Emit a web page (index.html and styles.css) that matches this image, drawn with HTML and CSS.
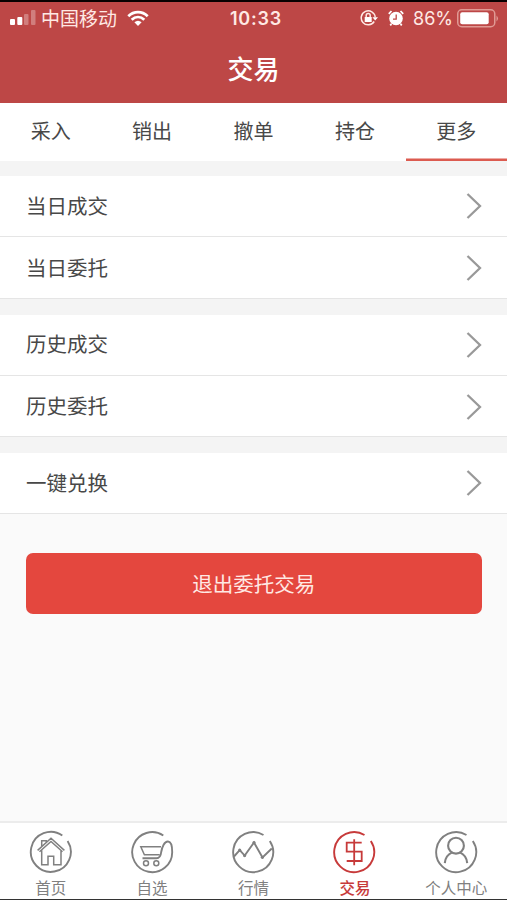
FILE: index.html
```html
<!DOCTYPE html>
<html lang="zh-CN">
<head>
<meta charset="utf-8">
<title>交易</title>
<link rel="stylesheet" href="styles.css">
</head>
<body>
<div class="app">
  <header class="header">
    <div class="status">
      <div class="status-left">
        <svg class="signal" width="26" height="16" viewBox="0 0 26 16"><rect x="0" y="9" width="5" height="6" rx="1"/><rect x="7.3" y="7" width="5" height="8" rx="1"/><rect class="dim" x="14" y="4" width="4.5" height="11" rx="1"/><rect class="dim" x="21" y="0" width="4.5" height="15" rx="1"/></svg>
        <span class="carrier">中国移动</span>
        <svg class="wifi" width="22" height="17" viewBox="0 0 22 17"><path d="M1.3 6.2C7 .8 15 .8 20.7 6.2M4.7 9.7c3.8-3.5 8.8-3.5 12.6 0"/><path class="solid" d="M7.4 12.3q3.6-3 7.2 0L11 16z"/></svg>
      </div>
      <time class="clock">10:33</time>
      <div class="status-right">
        <svg class="lock" width="18" height="16" viewBox="0 0 18 16"><path d="M14.2 11.5A7 7 0 1 1 15.2 7.2"/><path class="solid" d="M12.4 7.2H18L15.2 10.6zM4.7 7h7v5h-7z"/><path d="M6.2 7.2V5.6a2 2 0 0 1 4 0v1.6"/></svg>
        <svg class="alarm" width="16" height="16" viewBox="0 0 16 16"><circle class="solid" cx="8" cy="8.5" r="6.8"/><path d="M.8 3.8L3.5 1M15.2 3.8L12.5 1M3.5 14L2.2 15.3M12.5 14l1.3 1.3"/><path class="hands" d="M8.2 4.5v4.6H5"/></svg>
        <span class="percent">86%</span>
        <svg class="battery" width="42" height="19" viewBox="0 0 42 19"><rect class="case" x=".75" y=".75" width="37" height="17" rx="4"/><rect class="charge" x="3.2" y="3.2" width="28.5" height="12" rx="2"/><path class="tip" d="M39.5 6.5q3 3 0 6z"/></svg>
      </div>
    </div>
    <h1 class="title">交易</h1>
  </header>
  <nav class="tabs">
    <a class="tab">采入</a><a class="tab">销出</a><a class="tab">撤单</a><a class="tab">持仓</a><a class="tab tab-active">更多</a>
  </nav>
  <main class="content">
    <section class="group">
      <a class="row"><span>当日成交</span><svg class="arrow" viewBox="0 0 16 28"><path d="M1.5 2L14 14 1.5 26"/></svg></a>
      <a class="row"><span>当日委托</span><svg class="arrow" viewBox="0 0 16 28"><path d="M1.5 2L14 14 1.5 26"/></svg></a>
    </section>
    <section class="group">
      <a class="row"><span>历史成交</span><svg class="arrow" viewBox="0 0 16 28"><path d="M1.5 2L14 14 1.5 26"/></svg></a>
      <a class="row"><span>历史委托</span><svg class="arrow" viewBox="0 0 16 28"><path d="M1.5 2L14 14 1.5 26"/></svg></a>
    </section>
    <section class="group">
      <a class="row"><span>一键兑换</span><svg class="arrow" viewBox="0 0 16 28"><path d="M1.5 2L14 14 1.5 26"/></svg></a>
    </section>
    <button class="logout">退出委托交易</button>
  </main>
  <nav class="dock">
    <a class="dock-item">
      <svg class="dock-icon" viewBox="0 0 44 44"><path class="ring" d="M33.3 5.5A20 20 0 1 0 38.6 11"/><path d="M8.6 20.4L22 8.2l13.4 12.2M10.5 21.8L22 11.4l11.5 10.4M12.7 20v14.7H19v-8.4h5.7v8.4H32V20M12.7 16v-5.2h4.6v1.4"/></svg>
      <span>首页</span>
    </a>
    <a class="dock-item">
      <svg class="dock-icon" viewBox="0 0 44 44"><path class="ring" d="M33.3 5.5A20 20 0 1 0 42.2 22C42.2 16 41 11.8 38.2 11.5C34.5 11 32 17 31.2 22C30.8 26 29.5 28.3 26.5 28.3H12.5"/><path d="M31 16.7H10.8l3.6 8h15.3"/><circle cx="16" cy="33.2" r="2.5"/><circle cx="26.3" cy="33.2" r="2.5"/></svg>
      <span>自选</span>
    </a>
    <a class="dock-item">
      <svg class="dock-icon" viewBox="0 0 44 44"><path class="ring" d="M32.5 5A20 20 0 1 0 38.8 11"/><path class="ring" d="M3 26.5l5.7-6.3 5 5.4L23 12.5l8.5 15 9.3-9"/><g class="dots"><circle cx="8.7" cy="20.2" r="1.6"/><circle cx="13.6" cy="25.6" r="1.6"/><circle cx="23" cy="12.6" r="1.6"/><circle cx="31.4" cy="27.3" r="1.6"/></g></svg>
      <span>行情</span>
    </a>
    <a class="dock-item dock-active">
      <svg class="dock-icon" viewBox="0 0 44 44"><path class="ring" d="M32.5 5A20 20 0 1 0 38.8 11"/><path class="dollar" d="M29.7 12.7h-15v9h15V31h-15M22.2 9.2v26"/></svg>
      <span>交易</span>
    </a>
    <a class="dock-item">
      <svg class="dock-icon" viewBox="0 0 44 44"><path class="ring" d="M32.5 5A20 20 0 1 0 38.8 11"/><circle class="person" cx="22" cy="15.7" r="7.9"/><path class="person" d="M10.8 33.2c.4-5.3 3-8.9 7.4-10.8M33.2 33.2c-.4-5.3-3-8.9-7.4-10.8"/></svg>
      <span>个人中心</span>
    </a>
  </nav>
</div>
</body>
</html>
```
FILE: styles.css
```css
* { box-sizing: border-box; }

body {
  margin: 0;
  font-family: "Liberation Sans", "Noto Sans CJK SC", sans-serif;
  color: #484848;
}

.app {
  display: flex;
  flex-direction: column;
  height: 900px;
  overflow: hidden;
  background: #fafafa;
  border-top: 2px solid #090000;
  border-bottom: 1px solid #333;
}

.header {
  height: 101px;
  flex: none;
  background: #bd4746;
  color: #fff;
}

.status {
  display: grid;
  grid-template-columns: 1fr auto 1fr;
  align-items: center;
  height: 32px;
  padding: 0 8px 0 10px;
  color: #ffe9e4;
}

.status-left, .status-right { display: flex; align-items: center; }
.status-right { justify-content: flex-end; }
.status svg { flex: none; }

.signal { fill: #fff; }
.signal .dim { opacity: .3; }
.carrier { margin-left: 5px; padding-top: 3px; font-size: 19px; line-height: 29px; white-space: nowrap; }
.wifi { margin-left: 10px; fill: none; stroke: #fff; stroke-width: 2.8; }
.status .solid { fill: #fff; stroke: none; }

.clock {
  padding-left: 3px;
  font-family: Inter, "Liberation Sans", sans-serif;
  font-size: 18px;
  font-weight: 600;
  letter-spacing: .8px;
}

.lock { fill: none; stroke: #ffe9e4; stroke-width: 1.5; }
.alarm { margin-left: 10px; fill: none; stroke: #fff; stroke-width: 1.8; }
.alarm .hands { stroke: #bd4746; stroke-width: 1.3; }
.percent { margin: 0 4px 0 10px; font-family: Inter, sans-serif; font-size: 18px; }
.battery { fill: #fff; }
.lock, .alarm { transform: translateX(1px); }
.battery .case { fill: none; stroke: #e09a94; stroke-width: 1.5; }
.battery .tip { fill: #e09a94; }

.title {
  margin: 0;
  padding-top: 17px;
  font-size: 26px;
  font-weight: 500;
  line-height: 38px;
  text-align: center;
}

.tabs {
  display: grid;
  grid-template-columns: repeat(5, 1fr);
  flex: none;
  height: 58px;
  background: #fff;
}

.tab {
  padding-top: 2px;
  font-size: 20px;
  line-height: 54px;
  text-align: center;
}

.tab-active { box-shadow: inset 0 -2.5px #dc5b50; }

.content { flex: 1; }

.group {
  padding-top: 16px;
  background: #f4f4f4;
}
.group:first-child { padding-top: 15px; }

.row {
  display: flex;
  align-items: center;
  justify-content: space-between;
  height: 61.25px;
  padding: 0 25px 3px 26px;
  border-bottom: 1px solid #e5e5e5;
  background: #fff;
  font-size: 20.5px;
}
.row + .row { padding-bottom: 1px; }

.arrow {
  width: 16px;
  height: 28px;
  margin-top: 3px;
  fill: none;
  stroke: #999;
  stroke-width: 2.3;
}

.logout {
  display: block;
  width: 455.5px;
  height: 61px;
  margin: 38.5px 0 0 26px;
  padding: 0 0 1px;
  border: 0;
  border-radius: 7px;
  background: #e4473e;
  color: #ffe9e4;
  font: inherit;
  font-size: 20.5px;
}

.dock {
  display: grid;
  grid-template-columns: repeat(5, 1fr);
  flex: none;
  height: 78px;
  border-top: 2px solid #ececec;
  background: #fff;
}

.dock-item {
  display: flex;
  flex-direction: column;
  align-items: center;
  padding-top: 7px;
  color: #808080;
  font-size: 15.5px;
  line-height: 30px;
  white-space: nowrap;
}

.dock-active { color: #c73a3a; font-weight: 500; }

.dock-icon {
  flex: none;
  width: 44px;
  height: 44px;
  fill: none;
  stroke: currentColor;
  stroke-width: 1.5;
}
.dock-item:nth-child(n+3) .dock-icon { margin-left: -1px; }

.dock-icon .ring { stroke-width: 1.9; }
.dock-icon .dots { fill: currentColor; stroke: none; }
.dock-icon .dollar { stroke-width: 1.8; }
.dock-icon .person { stroke-width: 2.1; }
```
